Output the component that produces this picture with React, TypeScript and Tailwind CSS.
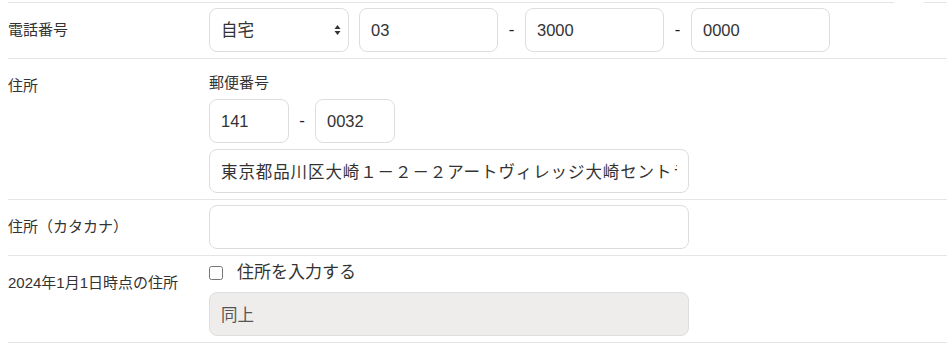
import React from 'react';

const font = "font-['Liberation_Sans','Noto_Sans_CJK_JP',sans-serif]";

const inputCls =
  'h-[44px] rounded-lg border border-[#dddddd] px-[11px] text-[16.5px] text-[#333] outline-none';

const Row = ({ label, children, className = '' }: any) => (
  <div className="flex border-b border-[#e5e5e5]">
    <div className="w-[201px] shrink-0 pt-[17px] text-[15px] leading-5 text-[#333]">{label}</div>
    <div className={`flex-1 ${className}`}>{children}</div>
  </div>
);

const Dash = ({ w }: { w: string }) => (
  <span className={`${w} shrink-0 text-center text-[17px] leading-[44px] text-[#222]`}>-</span>
);

export default function App() {
  return (
    <div className={`${font} bg-white pl-2 pt-[2px] h-[345px] overflow-hidden`}>
      {/* top rule, interrupted on the right */}
      <div className="flex h-px">
        <div className="w-[886px] bg-[#e5e5e5]" />
        <div className="w-[30px]" />
        <div className="flex-1 bg-[#e5e5e5]" />
      </div>

      {/* Phone */}
      <Row label="電話番号" className="pt-[5px] pb-[6px]">
        <div className="flex items-center">
          <div className="relative w-[140px] shrink-0">
            <select
              defaultValue="home"
              className={`${inputCls} w-full appearance-none bg-white`}
            >
              <option value="home">自宅</option>
              <option value="mobile">携帯</option>
            </select>
            <svg
              className="pointer-events-none absolute right-[8px] top-1/2 -translate-y-1/2"
              width="7"
              height="12"
              viewBox="0 0 7 12"
            >
              <path d="M3.5 1 L6.5 5 L0.5 5 Z" fill="#333" />
              <path d="M3.5 11 L6.5 7 L0.5 7 Z" fill="#333" />
            </svg>
          </div>
          <input className={`${inputCls} ml-[10px] w-[139px] bg-white`} defaultValue="03" />
          <Dash w="w-[27px]" />
          <input className={`${inputCls} w-[139px] bg-white`} defaultValue="3000" />
          <Dash w="w-[27px]" />
          <input className={`${inputCls} w-[139px] bg-white`} defaultValue="0000" />
        </div>
      </Row>

      {/* Address */}
      <Row label="住所" className="pt-[14px] pb-[6px]">
        <div className="text-[15px] leading-5 text-[#333]">郵便番号</div>
        <div className="mt-[6px] flex">
          <input className={`${inputCls} w-[80px] bg-white`} defaultValue="141" />
          <Dash w="w-[26px]" />
          <input className={`${inputCls} w-[80px] bg-white`} defaultValue="0032" />
        </div>
        <input
          className={`${inputCls} mt-[6px] block w-[480px] bg-white tracking-[0.9px]`}
          defaultValue="東京都品川区大崎１－２－２アートヴィレッジ大崎セントラルタワー"
        />
      </Row>

      {/* Address kana */}
      <Row label="住所（カタカナ）" className="pt-[5px] pb-[6px]">
        <input className={`${inputCls} block w-[480px] bg-white`} />
      </Row>

      {/* Address as of 2024-01-01 */}
      <Row label="2024年1月1日時点の住所" className="pt-[5px] pb-[6px]">
        <label className="flex h-[24px] items-center gap-[14px] text-[17px] text-[#333]">
          <input type="checkbox" className="m-0 h-[14px] w-[14px]" />
          住所を入力する
        </label>
        <input
          disabled
          className={`${inputCls} mt-[7px] block w-[480px] bg-[#eeedeb] text-[#555]`}
          defaultValue="同上"
        />
      </Row>
    </div>
  );
}
